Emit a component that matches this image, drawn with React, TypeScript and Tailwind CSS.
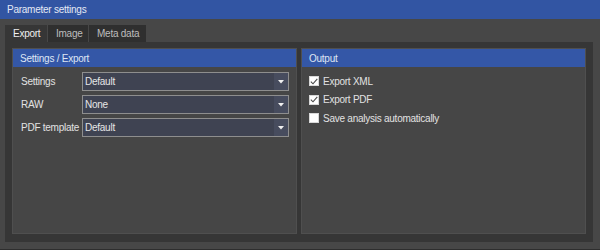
import { useState } from 'react'

const font = { fontFamily: '"Liberation Sans", Arial, sans-serif' }

function Select({ value }: { value: string }) {
  return (
    <div className="flex h-[19px] flex-1 border border-[#8e8e8e] bg-[#3f4352]">
      <span className="flex flex-1 items-center pl-[2px] text-[10px] text-[#e6e6e6]">{value}</span>
      <span className="flex w-[14px] items-center justify-center bg-[#474c5e]">
        <svg width="6" height="4" viewBox="0 0 6 4">
          <path d="M0 0 H6 L3 3.5 Z" fill="#f0f0f0" />
        </svg>
      </span>
    </div>
  )
}

function Check({ label, checked }: { label: string; checked: boolean }) {
  return (
    <div className="flex h-[18.5px] items-center gap-[4px]">
      <span className="flex h-[10px] w-[10px] items-center justify-center border border-[#d8d8d8] bg-white">
        {checked && (
          <svg width="8" height="7" viewBox="0 0 8 7">
            <path d="M0.8 3.6 L3 5.8 L7.3 0.8" fill="none" stroke="#4a4a4a" strokeWidth="1.1" />
          </svg>
        )}
      </span>
      <span className="text-[10px] text-[#e2e2e2]">{label}</span>
    </div>
  )
}

function Panel({ title, children }: { title: string; children: React.ReactNode }) {
  return (
    <div className="flex flex-1 flex-col border border-[#4f4f4f] bg-[#464646]">
      <div className="flex h-[18px] items-center bg-[#3457a7] pl-[7px] text-[10px] text-[#dfe6f4]">{title}</div>
      {children}
    </div>
  )
}

export default function App() {
  const [tab, setTab] = useState('Export')
  const tabs = [
    { name: 'Export', w: 'w-[42px]' },
    { name: 'Image', w: 'w-[40px]' },
    { name: 'Meta data', w: 'w-[57px]' },
  ]

  return (
    <div className="flex h-[250px] w-[600px] flex-col bg-[#474747] tracking-[-0.25px]" style={font}>
      <div className="flex h-[19px] items-center bg-[#3255a3] pl-[7px] text-[10px] text-[#e4e9f4]">
        Parameter settings
      </div>

      <div className="flex flex-1 flex-col border-b border-[#2e2e2e] pb-[7px] pl-[5px] pr-[7px] pt-[6px]">
        {/* Tabs */}
        <div className="flex h-[17px] gap-[1px]">
          {tabs.map((t) => (
            <button
              key={t.name}
              onClick={() => setTab(t.name)}
              className={`flex items-center pl-[8px] text-[10px] ${t.w} ${
                t.name === tab ? 'bg-[#363636] text-[#f0f0f0]' : 'bg-[#2f2f2f] text-[#bdbdbd]'
              }`}
            >
              {t.name}
            </button>
          ))}
        </div>

        {/* Tab content */}
        <div className="flex flex-1 gap-[4px] bg-[#363636] pb-[8px] pl-[7px] pr-[7px] pt-[6px]">
          <Panel title="Settings / Export">
            <div className="flex flex-col gap-[4px] pl-[8px] pr-[7px] pt-[5px]">
              {[
                ['Settings', 'Default'],
                ['RAW', 'None'],
                ['PDF template', 'Default'],
              ].map(([label, value]) => (
                <div key={label} className="flex items-center">
                  <span className="w-[61px] shrink-0 whitespace-nowrap text-[10px] text-[#e2e2e2]">{label}</span>
                  <Select value={value} />
                </div>
              ))}
            </div>
          </Panel>

          <Panel title="Output">
            <div className="flex flex-col pl-[7px] pt-[5px]">
              <Check label="Export XML" checked />
              <Check label="Export PDF" checked />
              <Check label="Save analysis automatically" checked={false} />
            </div>
          </Panel>
        </div>
      </div>
    </div>
  )
}
